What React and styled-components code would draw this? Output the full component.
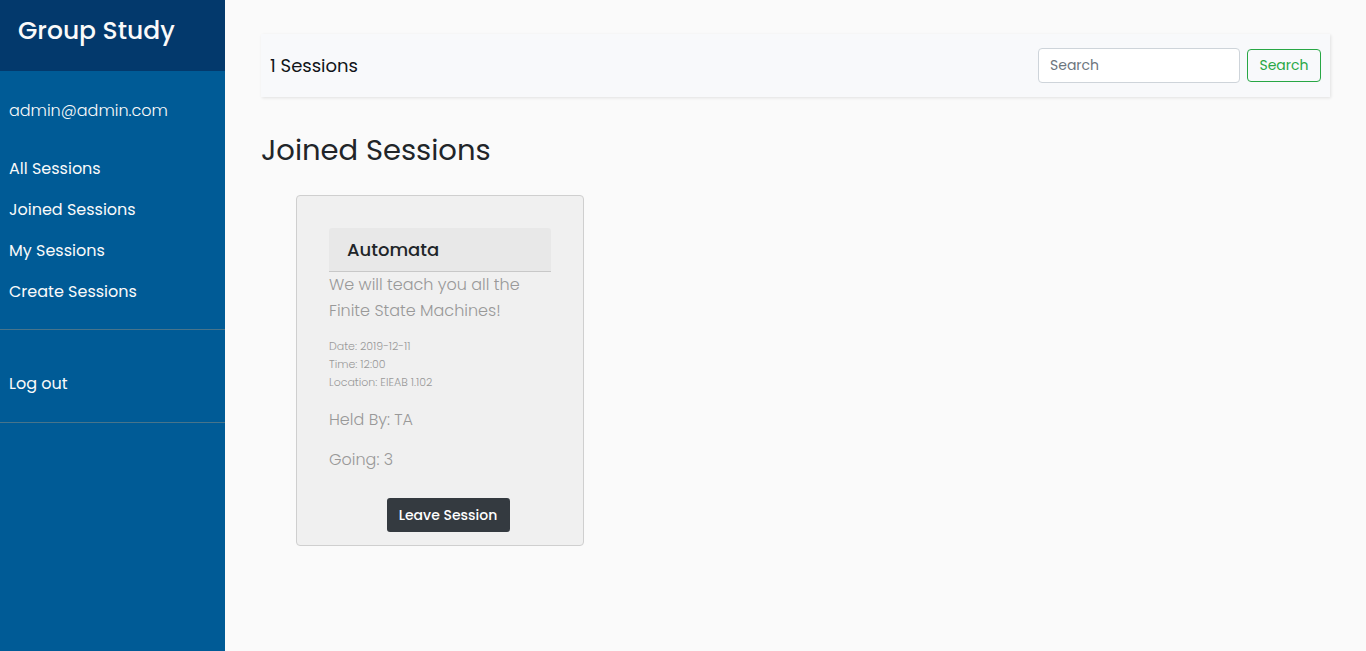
import React from "react";
import styled, { createGlobalStyle } from "styled-components";

const GlobalStyle = createGlobalStyle`
  *, *::before, *::after { box-sizing: border-box; }
  body {
    margin: 0;
    background: #fafafa;
    color: #212529;
    font-family: Poppins, Inter, "Open Sans", sans-serif;
    font-size: 16px;
    line-height: 24px;
  }
  h1, h2, h3, p, ul { margin: 0; padding: 0; }
  button, input { font-family: inherit; }
`;

const Page = styled.div`
  display: flex;
  min-height: 100vh;
`;

const Sidebar = styled.aside`
  flex: 0 0 225px;
  background: #005b96;
  color: #fafafa;
`;

const Brand = styled.h1`
  height: 71px;
  padding: 15px 18px;
  background: #03396c;
  font-size: 25px;
  line-height: 32px;
  font-weight: 500;
`;

const Account = styled.p`
  padding: 28px 9px 22px;
  font-weight: 300;
`;

const Menu = styled.ul`
  list-style: none;
  padding: ${(p) => (p.$spaced ? "33px 0 18px" : "3px 0 17px")};
  border-bottom: 1px solid #47748b;
`;

const MenuLink = styled.a`
  display: block;
  padding: 9px 9px 8px;
  color: #fafafa;
  font-weight: 400;
  text-decoration: none;
`;

const Main = styled.main`
  flex: 1;
  min-width: 0;
  padding: 34px 36px;
`;

const Toolbar = styled.header`
  display: flex;
  align-items: center;
  justify-content: space-between;
  height: 63px;
  padding: 0 9px;
  background: #f8f9fb;
  box-shadow: 1px 1px 3px rgba(0, 0, 0, 0.1);
`;

const Count = styled.p`
  color: #111418;
  font-size: 18px;
`;

const SearchForm = styled.form`
  display: flex;
  align-items: center;
  gap: 7px;
`;

const SearchInput = styled.input`
  width: 202px;
  height: 35px;
  padding: 0 11px;
  border: 1px solid #ced4da;
  border-radius: 4px;
  background: #fff;
  color: #495057;
  font-size: 14px;
  &::placeholder { color: #6c757d; opacity: 1; }
`;

const SearchButton = styled.button`
  width: 74px;
  height: 33px;
  padding: 0;
  border: 1px solid #28a745;
  border-radius: 4px;
  background: transparent;
  color: #28a745;
  font-size: 14px;
`;

const Title = styled.h2`
  padding: 35px 0 27px;
  font-size: 29px;
  line-height: 36px;
  font-weight: 400;
`;

const Card = styled.article`
  display: flex;
  flex-direction: column;
  width: 288px;
  margin-left: 35px;
  padding: 32px 32px 13px;
  border: 1px solid #cfcfcf;
  border-radius: 4px;
  background: #f0f0f0;
  color: #999;
  font-weight: 300;
`;

const CardHeader = styled.h3`
  padding: 10px 18px 9px;
  border-bottom: 1px solid #c8c8c8;
  border-radius: 3px 3px 0 0;
  background: #e8e8e8;
  color: #212529;
  font-size: 18px;
  line-height: 24px;
  font-weight: 500;
`;

const Description = styled.p`
  line-height: 26px;
`;

const Details = styled.p`
  padding: 13px 0 16px;
  font-size: 11px;
  line-height: 18px;
`;

const Fact = styled.p`
  padding-bottom: 14px;
  line-height: 26px;
`;

const LeaveButton = styled.button`
  align-self: center;
  width: 123px;
  height: 34px;
  margin: 11px 0 0 16px;
  padding: 0;
  border: 0;
  border-radius: 3px;
  background: #343a40;
  color: #fff;
  font-size: 14px;
  font-weight: 500;
`;

const links = ["All Sessions", "Joined Sessions", "My Sessions", "Create Sessions"];

export default function App() {
  return (
    <>
      <GlobalStyle />
      <Page>
        <Sidebar>
          <Brand>Group Study</Brand>
          <Account>admin@admin.com</Account>
          <nav>
            <Menu>
              {links.map((label) => (
                <li key={label}><MenuLink href="#">{label}</MenuLink></li>
              ))}
            </Menu>
            <Menu $spaced>
              <li><MenuLink href="#">Log out</MenuLink></li>
            </Menu>
          </nav>
        </Sidebar>
        <Main>
          <Toolbar>
            <Count>1 Sessions</Count>
            <SearchForm onSubmit={(e) => e.preventDefault()}>
              <SearchInput type="search" placeholder="Search" aria-label="Search" />
              <SearchButton type="submit">Search</SearchButton>
            </SearchForm>
          </Toolbar>
          <Title>Joined Sessions</Title>
          <Card>
            <CardHeader>Automata</CardHeader>
            <Description>We will teach you all the Finite State Machines!</Description>
            <Details>
              Date: 2019-12-11<br />
              Time: 12:00<br />
              Location: EIEAB 1.102
            </Details>
            <Fact>Held By: TA</Fact>
            <Fact>Going: 3</Fact>
            <LeaveButton type="button">Leave Session</LeaveButton>
          </Card>
        </Main>
      </Page>
    </>
  );
}
